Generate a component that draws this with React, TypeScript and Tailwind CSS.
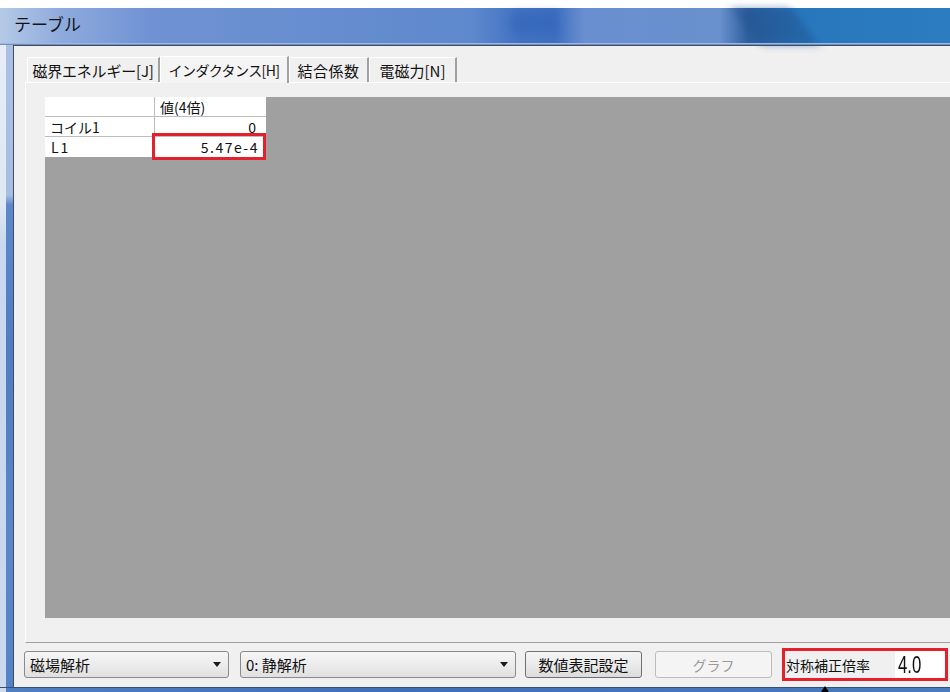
import React from "react";

const jp = "font-['Noto_Sans_CJK_JP','Noto_Sans',sans-serif]";

function Arrow() {
  return (
    <svg width="8" height="5" viewBox="0 0 8 5" className="shrink-0">
      <path d="M0 0 H8 L4 5 Z" fill="#1a1a1a" />
    </svg>
  );
}

function Combo({ label, width }: { label: string; width: string }) {
  return (
    <div
      className={`${width} h-[27px] shrink-0 flex items-center justify-between pl-[5px] pr-[7px] rounded-[3px] border border-[#8a8a8a] bg-gradient-to-b from-[#f6f6f6] via-[#ececec] to-[#e0e0e0] text-[15px] text-[#111]`}
    >
      <span className="leading-none">{label}</span>
      <Arrow />
    </div>
  );
}

type Tab = { label: string; w: string; text: string; active?: boolean };

const tabs: Tab[] = [
  { label: "磁界エネルギー[J]", w: "w-[133px]", text: "text-[15px] tracking-[-0.2px]" },
  { label: "インダクタンス[H]", w: "w-[129px]", text: "text-[14px] tracking-[-0.6px]", active: true },
  { label: "結合係数", w: "w-[80px]", text: "text-[15px] tracking-[0.5px]" },
  { label: "電磁力[N]", w: "w-[88px]", text: "text-[15px]" },
];

export default function App() {
  return (
    <div className={`w-[950px] h-[692px] overflow-hidden bg-white flex flex-col relative ${jp}`}>
      {/* strip above the window */}
      <div className="h-[8px] shrink-0 bg-white" />

      {/* caption */}
      <div className="h-[37px] shrink-0 relative bg-[linear-gradient(90deg,#b6cae7_0px,#8eabdd_60px,#7092d4_150px,#678ed0_300px,#5e89cd_470px,#4272c2_520px,#3e6fc1_555px,#6a8fd0_585px,#6891cd_720px,#2e5e9f_748px,#2877bd_800px,#2b7cc1_950px)]">
        <div className="absolute left-[510px] top-[4px] w-[50px] h-[22px] rounded-[6px] bg-[#2f63b8] opacity-50 blur-[4px]" />
        <div className="absolute left-[745px] top-[0px] w-[60px] h-[37px] bg-[#21538f] opacity-50 blur-[4px] skew-x-[35deg]" />
        <div className="absolute left-[14px] top-[7px] text-[17px] leading-none text-[#141414]">テーブル</div>
        <div className="absolute left-0 right-0 bottom-[1px] h-px bg-[#9db9e3]" />
        <div className="absolute left-0 right-0 bottom-0 h-px bg-[#6f8fbf]" />
      </div>

      <div className="flex h-[642px] shrink-0">
        {/* left frame */}
        <div className="w-[6px] shrink-0 bg-[linear-gradient(180deg,#e6edf6_0px,#dfe8f3_160px,#c9d8ee_200px,#cbd9ee_100%)]" />
        <div className="w-[7px] shrink-0 bg-[linear-gradient(180deg,#aac0e3_0px,#a7bee3_150px,#5d88cb_160px,#4f7cc2_300px,#5a86ca_500px,#5383c6_100%)]" />

        {/* client area */}
        <div className="flex-1 flex flex-col bg-[#f0f0f0] border-l border-t border-[#3f4d5e]">
          {/* tab strip */}
          <div className="mt-[9px] h-[27px] shrink-0 flex items-end pl-[13px]">
            {tabs.map((t) => (
              <div
                key={t.label}
                className={`${t.w} ${t.text} shrink-0 flex items-center justify-center leading-none whitespace-nowrap text-[#111] border-t border-l border-white border-r-2 border-r-[#a0a0a0] ${
                  t.active ? "h-[27px] bg-[#f4f4f4] relative z-10 -mb-px" : "h-[25px] bg-[#f0f0f0]"
                }`}
              >
                <span className={t.active ? "-mt-[1px]" : ""}>{t.label}</span>
              </div>
            ))}
          </div>

          {/* tab page */}
          <div className="ml-[11px] h-[561px] shrink-0 flex flex-col border-t border-l border-white border-b border-b-[#a0a0a0] pl-[19px] pt-[14px] pb-[24px]">
            <div className="flex-1 bg-[#a0a0a0] relative">
              <div className="w-[221px] text-[14px] leading-none text-[#111]">
                <div className="flex h-[20px] bg-white border-b border-[#bdbdbd]">
                  <div className="w-[110px] border-r border-[#bdbdbd]" />
                  <div className="flex-1 flex items-center pl-[5px]">値(4倍)</div>
                </div>
                <div className="flex h-[20px] bg-white border-b border-[#bdbdbd]">
                  <div className="w-[110px] border-r border-[#bdbdbd] flex items-center pl-[5px]">コイル1</div>
                  <div className="flex-1 flex items-center justify-end pr-[9px] tracking-[1px]">0</div>
                </div>
                <div className="flex h-[20px] bg-white">
                  <div className="w-[110px] border-r border-[#bdbdbd] flex items-center pl-[6px] tracking-[2px]">L1</div>
                  <div className="flex-1 flex items-center justify-end pr-[7px] tracking-[1.5px]">5.47e-4</div>
                </div>
              </div>
              <div className="absolute left-[107px] top-[36px] w-[114px] h-[27px] border-[3px] border-[#e3202b]" />
            </div>
          </div>

          {/* bottom controls */}
          <div className="mt-[5px] h-[33px] shrink-0 flex items-center pl-[10px]">
            <Combo label="磁場解析" width="w-[205px]" />
            <div className="w-[11px] shrink-0" />
            <Combo label="0: 静解析" width="w-[276px]" />
            <div className="w-[9px] shrink-0" />
            <div className="w-[117px] h-[27px] shrink-0 flex items-center justify-center rounded-[3px] border border-[#707070] bg-gradient-to-b from-[#f4f4f4] via-[#ebebeb] to-[#dcdcdc] text-[15px] leading-none text-[#111]">
              数値表記設定
            </div>
            <div className="w-[13px] shrink-0" />
            <div className="w-[117px] h-[27px] shrink-0 flex items-center justify-center rounded-[3px] border border-[#bcbcbc] bg-[#f4f4f4] text-[14px] leading-none text-[#9a9a9a]">
              グラフ
            </div>
            <div className="w-[10px] shrink-0" />
            <div className="w-[166px] h-[33px] shrink-0 flex items-center border-[3px] border-[#e3202b]">
              <span className="pl-[1px] text-[14px] leading-none text-[#111] whitespace-nowrap">対称補正倍率</span>
              <div className="ml-auto w-[50px] h-[27px] bg-white flex items-center pl-[3px]">
                <span className="text-[24px] leading-none text-[#111] inline-block scale-x-[0.7] origin-left font-['Liberation_Sans',sans-serif]">4.0</span>
              </div>
            </div>
          </div>
        </div>
      </div>

      {/* bottom frame */}
      <div className="flex-1 relative bg-[linear-gradient(90deg,#cfdcef_0px,#cfdcef_6px,#4f7ec3_6px,#3e6fb9_400px,#4a7bc0_950px)] border-t border-[#36506f]">
        <svg width="8" height="6" viewBox="0 0 8 6" className="absolute left-[821px] -top-[2px]">
          <path d="M4 0 L8 6 H0 Z" fill="#000" />
        </svg>
      </div>
    </div>
  );
}
